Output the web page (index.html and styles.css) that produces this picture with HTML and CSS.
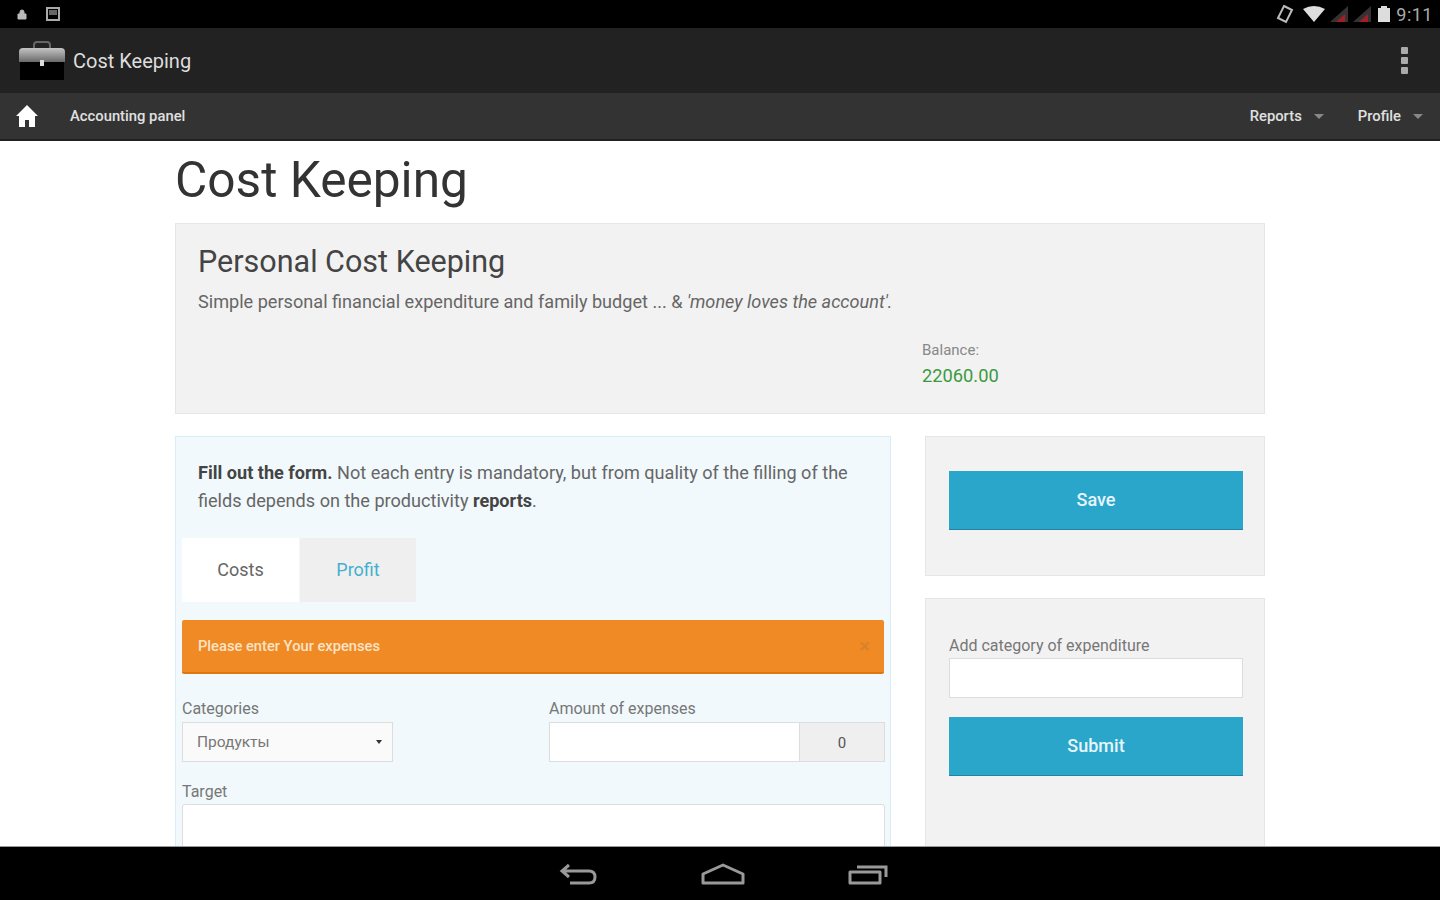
FILE: index.html
```html
<!DOCTYPE html>
<html lang="en">
<head>
<meta charset="utf-8" />
<link rel="stylesheet" href="styles.css">
</head>
<body>
  <div class="screen">
    <div class="status">
      <div class="status-left">
        <svg width="10" height="11" viewBox="0 0 10 11"><path d="M1 5h8v5H1z M3 5V3a2 2 0 0 1 4 0v2" fill="#bbb" stroke="#bbb"/></svg>
        <svg width="14" height="14" viewBox="0 0 14 14"><path d="M1 1h12v12H1z" fill="none" stroke="#aaa" stroke-width="2"/><path d="M3 3h8v5H3z" fill="#666"/></svg>
      </div>
      <div class="status-right">
        <svg class="rotate" width="18" height="20" viewBox="0 0 18 20"><path d="M8 2l8 4-6 12-8-4z" fill="none" stroke="#bbb" stroke-width="2"/></svg>
        <svg width="24" height="16" viewBox="0 0 24 16"><path d="M1 3Q12-3 23 3L12 16z" fill="#ddd"/></svg>
        <svg class="signal" width="20" height="18" viewBox="0 0 20 18"><path d="M1 17L19 1v16z" fill="#333"/><path d="M7 17l9-8v8z" fill="#a11f24"/></svg>
        <svg class="signal" width="20" height="18" viewBox="0 0 20 18"><path d="M1 17L19 1v16z" fill="#333"/><path d="M7 17l9-8v8z" fill="#a11f24"/></svg>
        <svg class="battery" width="12" height="16" viewBox="0 0 12 16"><path d="M3 0h6v2h3v14H0V2h3z" fill="#ddd"/></svg>
        <span class="clock">9:11</span>
      </div>
    </div>

    <div class="actionbar">
      <svg class="case" width="48" height="42" viewBox="0 0 48 42">
        <defs>
          <linearGradient id="lid" x1="0" y1="0" x2="0" y2="1">
            <stop offset="0" stop-color="#c4c4c4"/>
            <stop offset="1" stop-color="#6a6a6a"/>
          </linearGradient>
        </defs>
        <path d="M16 8V5q0-3 3-3h10q3 0 3 3v3" fill="none" stroke="#666" stroke-width="2"/>
        <path d="M1 12q0-4 4-4h38q4 0 4 4v10H1z" fill="url(#lid)"/>
        <path d="M2 22h44v17q0 1-1 1H3q-1 0-1-1z" fill="#000"/>
        <path d="M22 20h4v6h-4z" fill="#ddd"/>
      </svg>
      <span class="app-title">Cost Keeping</span>
      <div class="dots"><i></i><i></i><i></i></div>
    </div>

    <div class="topnav">
      <svg class="home" width="24" height="24" viewBox="0 0 24 24"><path d="M12 1L1 12h3v11h6v-7h4v7h6V12h3z" fill="#fff"/></svg>
      <a class="nav-main">Accounting panel</a>
      <div class="nav-right">
        <a class="nav-item">Reports<b class="caret"></b></a>
        <a class="nav-item">Profile<b class="caret"></b></a>
      </div>
    </div>

    <div class="content">
      <div class="container">
        <h1>Cost Keeping</h1>
        <div class="hero">
          <h2>Personal Cost Keeping</h2>
          <p class="lead">Simple personal financial expenditure and family budget ... &amp; <em>'money loves the account'.</em></p>
          <div class="balance">
            <span class="balance-label">Balance:</span>
            <span class="balance-value">22060.00</span>
          </div>
        </div>

        <div class="columns">
          <div class="form-panel">
            <p class="intro"><strong>Fill out the form.</strong> Not each entry is mandatory, but from quality of the filling of the fields depends on the productivity <strong>reports</strong>.</p>
            <div class="tabs">
              <div class="tab active">Costs</div>
              <div class="tab">Profit</div>
            </div>
            <div class="alert">
              <span>Please enter Your expenses</span>
              <span class="close">×</span>
            </div>
            <div class="row">
              <div class="cat-field">
                <label>Categories</label>
                <div class="select">Продукты<b class="select-arrow"></b></div>
              </div>
              <div class="amount-field">
                <label>Amount of expenses</label>
                <div class="input-group">
                  <div class="input grow"></div>
                  <div class="addon">0</div>
                </div>
              </div>
            </div>
            <label class="target-label">Target</label>
            <div class="input textarea"></div>
          </div>

          <div class="side">
            <div class="card save-card">
              <div class="btn">Save</div>
            </div>
            <div class="card add-card">
              <label>Add category of expenditure</label>
              <div class="input add-input"></div>
              <div class="btn">Submit</div>
            </div>
          </div>
        </div>
      </div>
    </div>

    <div class="softkeys">
      <svg width="40" height="28" viewBox="0 0 40 28"><path d="M3 11h27q6 0 6 6t-6 6H11 M10 5l-7 6 7 6" fill="none" stroke="#999" stroke-width="3"/></svg>
      <svg width="44" height="24" viewBox="0 0 44 24"><path d="M2 12L22 3l20 9v9H2z" fill="none" stroke="#999" stroke-width="3" stroke-linejoin="round"/></svg>
      <svg width="42" height="24" viewBox="0 0 42 24"><path d="M3 10h30v11H3z" fill="none" stroke="#999" stroke-width="3" stroke-linejoin="round"/><path d="M10 5h29v10" fill="none" stroke="#999" stroke-width="3"/></svg>
    </div>
  </div>
</body>
</html>
```

FILE: styles.css
```css
*{
  margin:0;
  padding:0;
  box-sizing:border-box;
}
body{
  font-family:Roboto,"Noto Sans CJK SC",sans-serif;
  background:#000;
}
.screen{
  width:1440px;
  height:900px;
  display:flex;
  flex-direction:column;
  overflow:hidden;
}
.status{
  height:28px;
  background:#000;
  display:flex;
  justify-content:space-between;
  align-items:center;
  padding:0 7px 0 17px;
}
.status-left{
  display:flex;
  align-items:center;
  gap:19px;
}
.status-right{
  display:flex;
  align-items:center;
  gap:3px;
}
.rotate{
  margin-right:5px;
}
.battery{
  margin-left:3px;
}
.clock{
  color:#aaa;
  font-size:18px;
  letter-spacing:.5px;
  margin-left:3px;
}
.actionbar{
  height:65px;
  background:#222;
  display:flex;
  align-items:center;
  padding:0 32px 0 18px;
}
.app-title{
  color:#ddd;
  font-size:20px;
  margin-left:7px;
}
.dots{
  margin-left:auto;
  display:flex;
  flex-direction:column;
  gap:3px;
}
.dots i{
  display:block;
  width:7px;
  height:7px;
  background:#aaa;
  border-radius:1px;
}
.topnav{
  height:48px;
  background:#333;
  border-bottom:2px solid #222;
  display:flex;
  align-items:center;
  padding:0 17px 0 15px;
  color:#e0e0e0;
  font-size:14.8px;
  font-weight:500;
}
.nav-main{
  margin-left:31px;
}
.nav-right{
  margin-left:auto;
  display:flex;
  gap:34px;
}
.nav-item{
  display:flex;
  align-items:center;
}
.caret{
  width:0;
  height:0;
  margin-left:12px;
  border:5px solid transparent;
  border-top-color:#888;
  border-bottom:0;
}
.content{
  flex:1;
  background:#fff;
  overflow:hidden;
  padding-left:175px;
  border-bottom:1px solid #999;
}
.container{
  width:1090px;
}
h1{
  font-size:49.6px;
  font-weight:400;
  line-height:56px;
  color:#333;
  margin:11px 0 15px;
}
.hero{
  height:191px;
  background:#f2f2f2;
  border:1px solid #e6e6e6;
  padding:0 22px;
  position:relative;
}
h2{
  font-size:30.5px;
  font-weight:400;
  line-height:40px;
  color:#444;
  margin-top:18px;
}
.lead{
  font-size:18.13px;
  line-height:24px;
  color:#666;
  margin-top:8px;
}
.balance{
  margin-left:724px;
  margin-top:25px;
  display:flex;
  flex-direction:column;
}
.balance-label{
  font-size:15px;
  line-height:22px;
  color:#888;
}
.balance-value{
  font-size:18.3px;
  line-height:30px;
  color:#3b9a3f;
}
.columns{
  display:flex;
  justify-content:space-between;
  margin-top:22px;
}
.form-panel{
  width:716px;
  height:420px;
  background:#f1f9fc;
  border:1px solid #d8edf5;
  padding:22px 6px 0;
}
.intro{
  font-size:18.1px;
  line-height:28px;
  color:#666;
  padding:0 16px;
}
.intro strong{
  color:#444;
  font-weight:700;
}
.tabs{
  display:flex;
  margin-top:23px;
}
.tab{
  width:116px;
  height:64px;
  line-height:64px;
  text-align:center;
  font-size:18px;
  background:#efefef;
  color:#45afd0;
}
.tab.active{
  width:117px;
  background:#fff;
  color:#666;
  margin-right:1px;
}
.alert{
  margin-top:18px;
  width:702px;
  height:54px;
  background:#f08a24;
  border-bottom:2px solid #de770f;
  border-radius:2px;
  display:flex;
  justify-content:space-between;
  align-items:center;
  padding:0 14px 0 16px;
  color:#fbe3c8;
  font-size:14.7px;
  font-weight:500;
}
.close{
  color:#d9822b;
  font-size:20px;
}
label{
  display:block;
  font-size:16px;
  line-height:20px;
  color:#777;
}
.row{
  display:flex;
  width:703px;
  margin-top:25px;
}
.cat-field{
  width:367px;
}
.amount-field{
  flex:1;
}
.cat-field label,.amount-field label{
  margin-bottom:3px;
}
.select{
  width:211px;
  height:40px;
  background:#fafafa;
  border:1px solid #ddd;
  display:flex;
  justify-content:space-between;
  align-items:center;
  padding:0 10px 0 14px;
  font-size:15.5px;
  color:#777;
}
.select-arrow{
  width:0;
  height:0;
  border:3px solid transparent;
  border-top:4px solid #333;
  border-bottom:0;
}
.input{
  height:40px;
  background:#fff;
  border:1px solid #ddd;
}
.input-group{
  display:flex;
  width:336px;
}
.grow{
  flex:1;
}
.addon{
  width:85px;
  height:40px;
  line-height:40px;
  text-align:center;
  background:#efefef;
  border:1px solid #ddd;
  border-left:0;
  font-size:15px;
  color:#555;
}
.target-label{
  margin-top:20px;
  margin-bottom:2px;
}
.textarea{
  width:703px;
  height:90px;
  border-radius:3px;
}
.side{
  width:340px;
}
.card{
  background:#f2f2f2;
  border:1px solid #e6e6e6;
  padding:0 22px 0 23px;
}
.save-card{
  height:140px;
  padding-top:34px;
}
.add-card{
  height:300px;
  margin-top:22px;
  padding-top:37px;
}
.add-input{
  width:294px;
  margin-top:2px;
}
.btn{
  width:294px;
  height:59px;
  line-height:57px;
  text-align:center;
  background:#2ba6cb;
  border-bottom:1px solid #2284a1;
  color:#e6f5fa;
  font-size:18px;
  font-weight:500;
}
.add-input + .btn{
  margin-top:19px;
}
.softkeys{
  height:53px;
  flex:none;
  background:#000;
  display:flex;
  justify-content:center;
  align-items:center;
  gap:102px;
  padding-left:7px;
}
```
